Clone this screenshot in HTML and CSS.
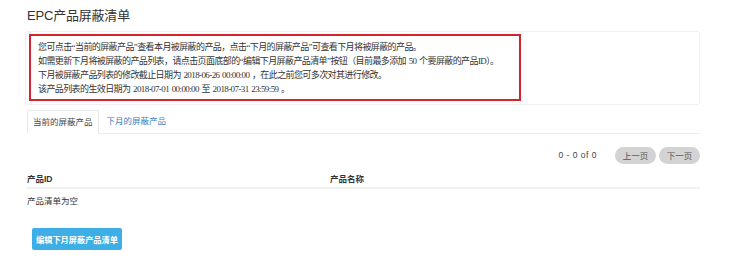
FILE: index.html
```html
<!DOCTYPE html>
<html lang="zh">
<head>
<meta charset="utf-8">
<link rel="stylesheet" href="styles.css">
</head>
<body>
<div class="page">
  <h1 class="title">EPC产品屏蔽清单</h1>
  <div class="panel">
    <div class="notice">
      <p>您可点击“当前的屏蔽产品”查看本月被屏蔽的产品，点击“下月的屏蔽产品”可查看下月将被屏蔽的产品。</p>
      <p>如需更新下月将被屏蔽的产品列表，请点击页面底部的“编辑下月屏蔽产品清单”按钮（目前最多添加 50 个要屏蔽的产品ID）。</p>
      <p>下月被屏蔽产品列表的修改截止日期为 2018-06-26 00:00:00 ，在此之前您可多次对其进行修改。</p>
      <p>该产品列表的生效日期为 2018-07-01 00:00:00 至 2018-07-31 23:59:59 。</p>
    </div>
  </div>
  <div class="tabs">
    <div class="tab active">当前的屏蔽产品</div>
    <div class="tab link">下月的屏蔽产品</div>
  </div>
  <div class="pager">
    <span class="count">0 - 0 of 0</span>
    <button class="pbtn">上一页</button>
    <button class="pbtn">下一页</button>
  </div>
  <div class="thead">
    <div class="col-id">产品ID</div>
    <div class="col-name">产品名称</div>
  </div>
  <div class="empty">产品清单为空</div>
  <button class="edit">编辑下月屏蔽产品清单</button>
</div>
</body>
</html>
```
FILE: styles.css
```css
* { box-sizing: border-box; }
html, body { margin: 0; padding: 0; background: #fff; }
body { font-family: "Helvetica Neue", "Liberation Sans", "Noto Sans CJK SC", sans-serif; color: #333; }
.page { width: 673px; margin-left: 27px; padding-top: 6px; }
.title { margin: 0; font-size: 13px; font-weight: normal; line-height: 20px; color: #333; letter-spacing: -0.2px; }
.panel {
  margin: 5px 0 0 -2px;
  border: 1px solid #f0f0f0;
  border-radius: 3px;
  padding: 2px 178px 3px 3px;
  height: 74px;
}
.notice {
  border: 2px solid #d4232e;
  height: 67px;
  padding: 4px 0 0 7px;
  font-family: "Liberation Serif", "Noto Sans CJK SC", serif;
  font-size: 9px;
  letter-spacing: -0.6px;
  word-spacing: 1px;
  color: #333;
}
.notice p { margin: 0; line-height: 14px; white-space: nowrap; }
.tabs { display: flex; margin-top: 5px; border-bottom: 1px solid #ececec; height: 24px; }
.tab { font-size: 8.5px; padding: 0 8px; line-height: 23px; height: 24px; white-space: nowrap; }
.tab.active { border: 1px solid #e8e8e8; border-bottom: 1px solid #fff; border-radius: 2px 2px 0 0; color: #444; padding: 0 5px; }
.tab.link { color: #3a7fc1; padding: 0 8px; }
.pager { display: flex; justify-content: flex-end; align-items: center; margin-top: 12px; height: 18px; }
.count { font-size: 8.5px; color: #444; margin-right: 15px; letter-spacing: 0.5px; }
.pbtn {
  border: none; background: #d3d3d3; color: #555; font-family: inherit;
  font-size: 8.5px; height: 17px; width: 41px; border-radius: 9px; padding: 0; margin-left: 3px;
}
.thead { display: flex; margin-top: 5px; height: 20px; align-items: center; border-bottom: 2px solid #f1f1f1; font-size: 8.5px; font-weight: 600; color: #333; }
.col-id { width: 303px; }
.empty { font-size: 8.5px; line-height: 20px; color: #333; margin-top: 2px; }
.edit {
  display: block; margin: 17px 0 0 5px; border: none; border-radius: 2px;
  background: #3eaee6; color: #fff; font-family: inherit; font-weight: bold;
  font-size: 8.2px; width: 90px; height: 22px; padding: 0;
}
```
